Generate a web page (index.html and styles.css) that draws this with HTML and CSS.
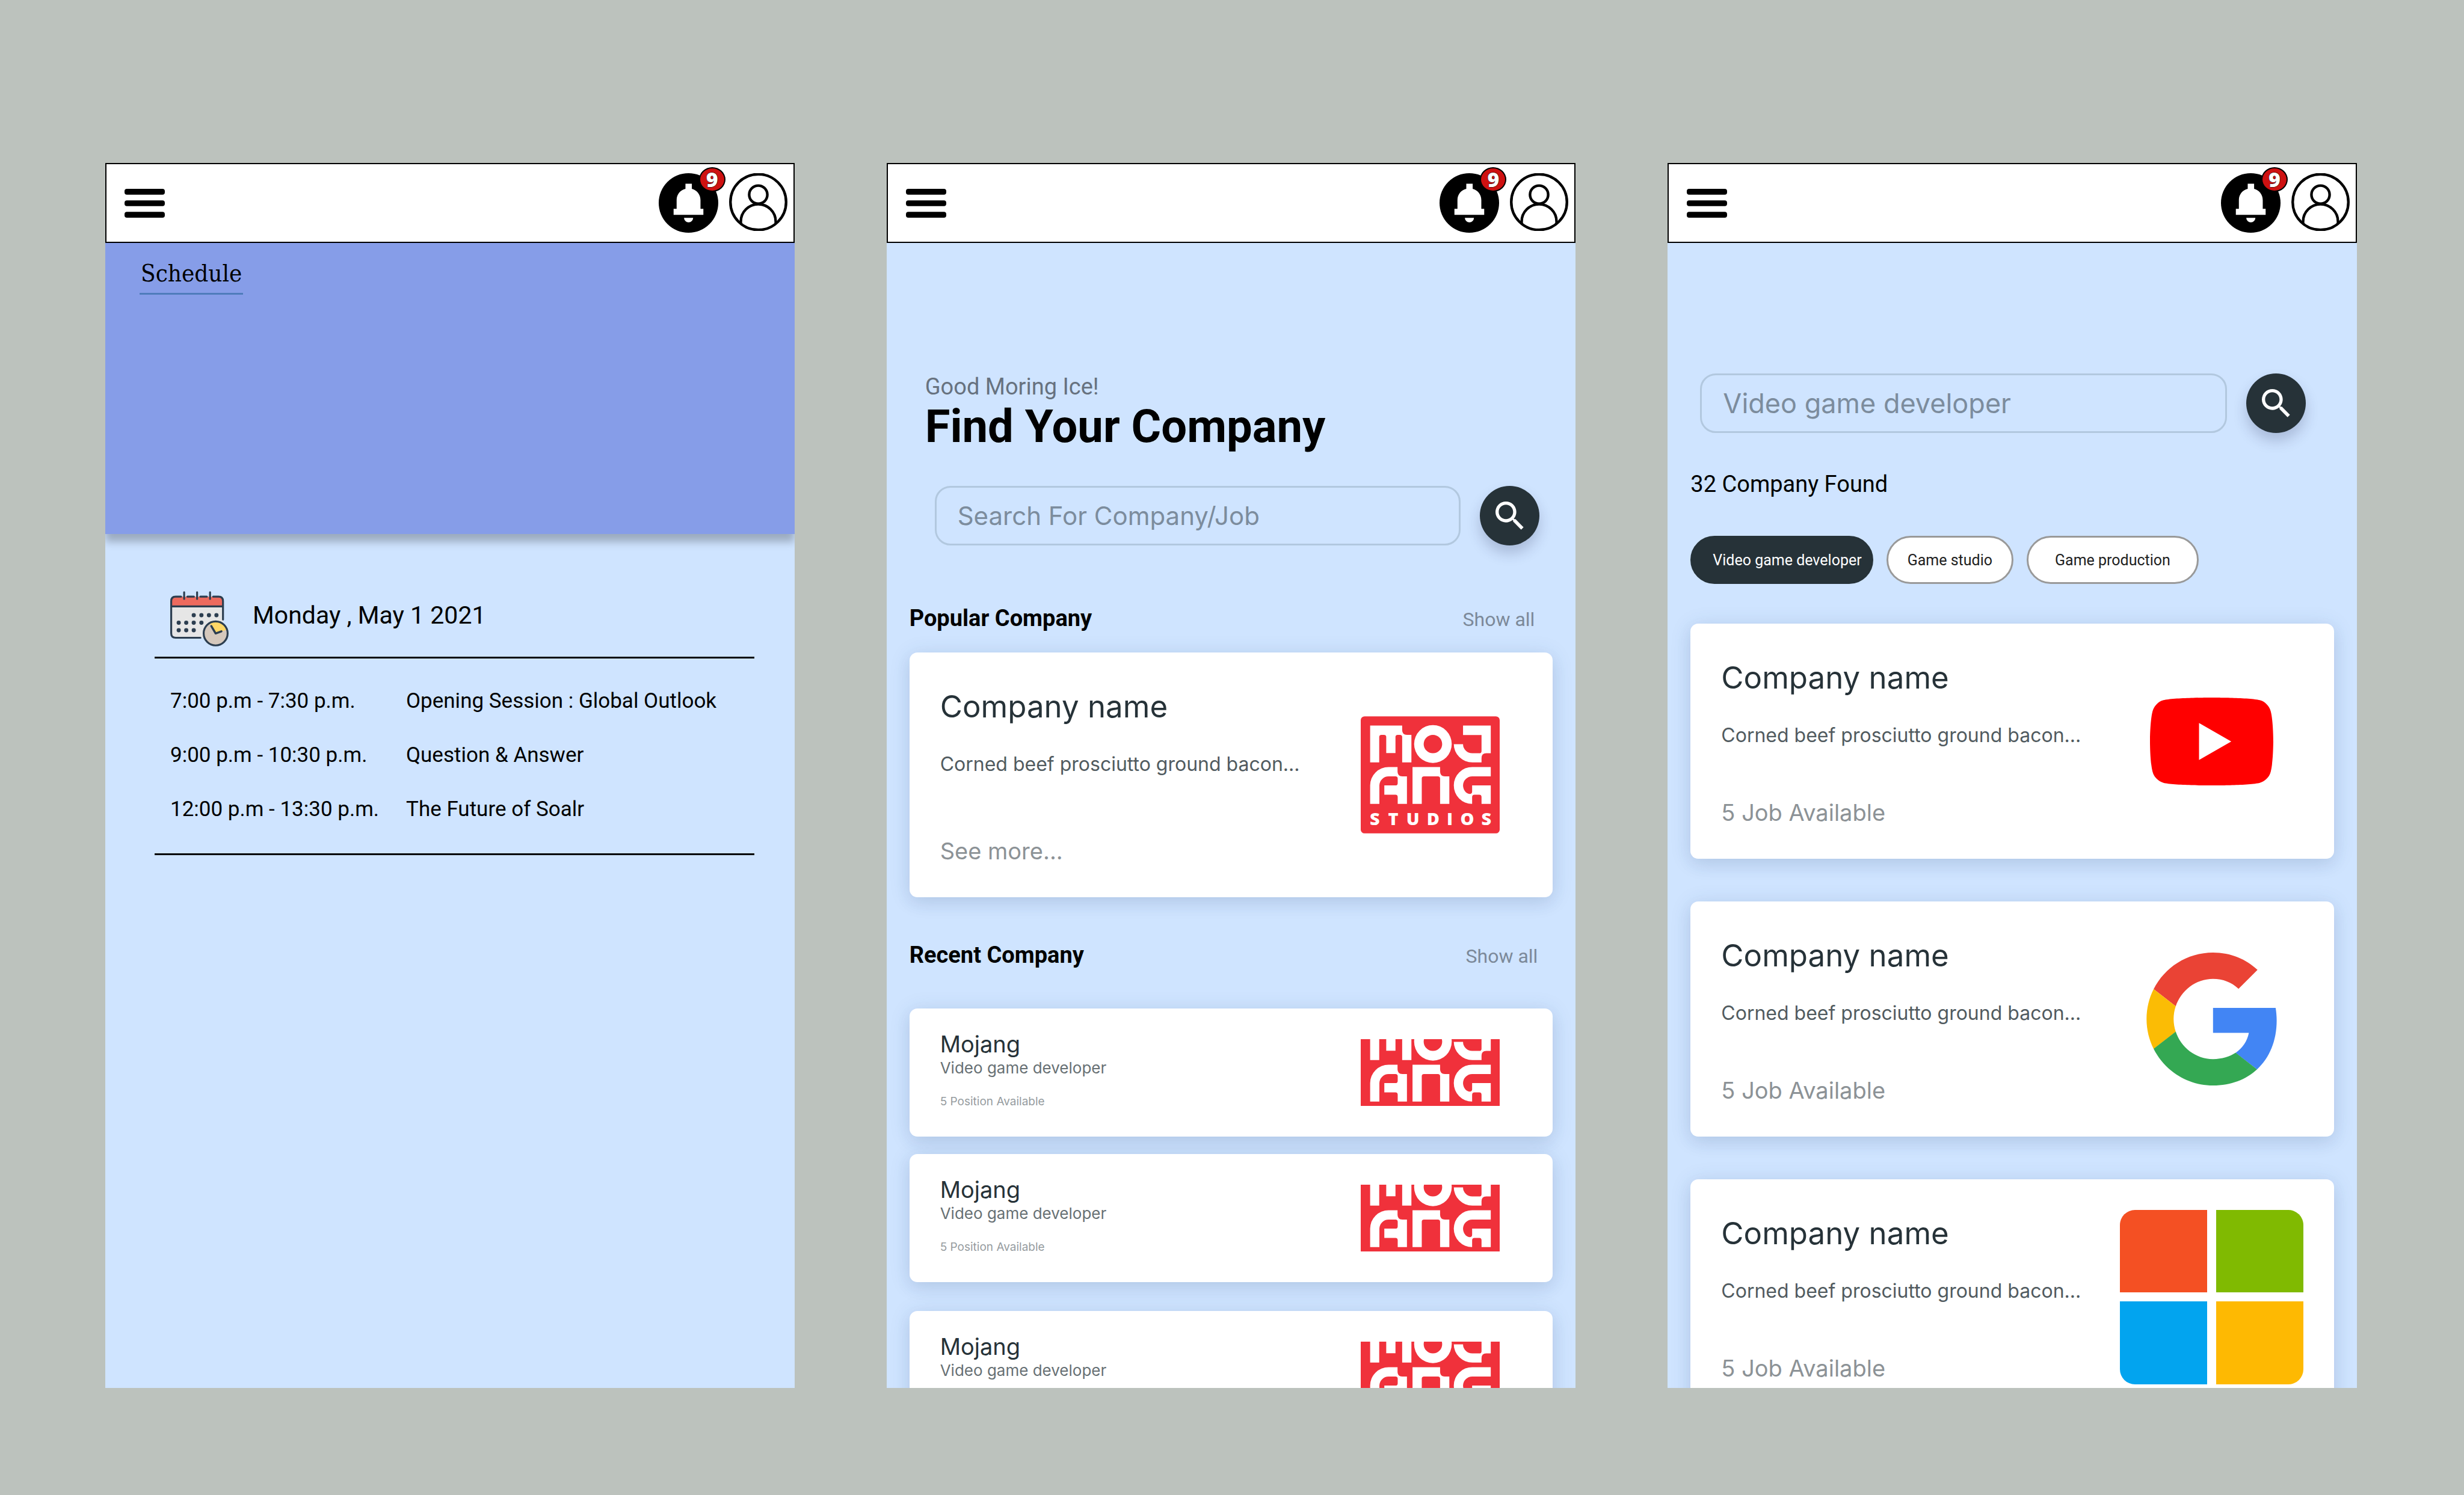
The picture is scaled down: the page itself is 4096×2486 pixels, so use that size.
FILE: index.html
```html
<!DOCTYPE html>
<html lang="en">
<head>
<meta charset="utf-8">
<meta name="viewport" content="width=device-width, initial-scale=1">
<title>Company finder</title>
<link rel="stylesheet" href="styles.css">
</head>
<body>
<svg class="sprite" aria-hidden="true">
  <symbol id="menu" viewBox="0 0 84 60">
    <rect width="84" height="12" rx="5"/><rect y="24" width="84" height="12" rx="5"/><rect y="48" width="84" height="12" rx="5"/>
  </symbol>
  <symbol id="bell" viewBox="0 0 124 124">
    <circle cx="62" cy="62" r="62"/>
    <path fill="#fff" d="M55.700 22H69V32.500C79 35 87 44 87 56V74.300H93V86.700H31V74.300H37.300V56C37.300 44 45 35 55.700 32.500ZM52.700 93H71.700A9.500 9.500 0 0 1 52.700 93Z"/>
  </symbol>
  <symbol id="user" viewBox="0 0 122 120">
    <g fill="none" stroke="#000" stroke-width="5.500"><circle cx="61" cy="60" r="58.200"/><circle cx="61" cy="44.500" r="19"/><path d="M24.500 106V101A36.500 36.500 0 0 1 97.500 101V106"/></g>
  </symbol>
  <symbol id="search" viewBox="0 0 24 24">
    <path fill="#fff" d="M15.500 14h-.79l-.28-.27A6.471 6.471 0 0 0 16 9.500 6.500 6.500 0 1 0 9.500 16c1.610 0 3.090-.59 4.230-1.570l.27.28v.79l5 4.990L20.490 19l-4.990-5zm-6 0C7.010 14 5 11.990 5 9.500S7.010 5 9.500 5 14 7.010 14 9.500 11.990 14 9.500 14z"/>
  </symbol>
  <symbol id="mojang" viewBox="0 0 872 735">
    <rect width="872" height="735" rx="24" fill="#f0313b"/>
    <g fill="#fff">
      <path d="M59 58H260V86Q260 116 290 116H318V289H260V130Q260 116 246 116H232Q218 116 218 130V231H160V130Q160 116 146 116H130Q116 116 116 130V289H59Z"/>
      <path fill-rule="evenodd" d="M453 55A118 119 0 1 1 453 293A118 119 0 1 1 453 55ZM453 116A58 58 0 1 0 453 232A58 58 0 1 0 453 116Z"/>
      <path d="M642 58H816V232H788Q758 232 758 262V289H701A117 114 0 0 1 584 175H642A58 57 0 0 0 701 232H744Q758 232 758 218V117H642Z"/>
      <path d="M59 550V434A116 116 0 0 1 175 318H231V347Q231 377 261 377H290V550H232V507Q232 492 218 492H148V434H217Q232 434 232 419V391Q232 377 218 377H175A58 58 0 0 0 117 434V550Z"/>
      <path d="M325 318H498V347Q498 377 528 377H556V550H498V391Q498 377 484 377H397Q383 377 383 391V550H325Z"/>
      <path d="M816 318H701A116 116 0 0 0 699 550V507Q699 492 714 492H744Q758 492 758 507V550H816V434H699V472Q699 487 683 487C660 487 642 460 642 434A58 58 0 0 1 701 377H816Z"/>
      <text class="studios" x="88 204 327 454 559 668 788" y="684">STUDIOS</text>
    </g>
  </symbol>
</svg>

<main class="board">
  <section class="phone">
    <header class="topbar">
      <button class="icon-button" aria-label="Menu"><svg class="menu-icon"><use href="#menu"/></svg></button>
      <div class="topbar-actions">
        <button class="icon-button bell" aria-label="Notifications"><svg class="bell-icon"><use href="#bell"/></svg><span class="badge">9</span></button>
        <button class="icon-button" aria-label="Profile"><svg class="user-icon"><use href="#user"/></svg></button>
      </div>
    </header>
    <div class="banner"><h1 class="banner-title">Schedule</h1></div>
    <div class="agenda">
      <div class="agenda-head">
        <svg class="calendar-icon" viewBox="0 0 365 345" aria-hidden="true">
          <rect x="6" y="34" width="324" height="257" rx="28" fill="#e6e6e6"/>
          <path fill="#ed6a5e" d="M6 95V62Q6 34 34 34H302Q330 34 330 62V95Z"/>
          <g fill="none" stroke="#2c3e50" stroke-width="12" stroke-linecap="round" stroke-linejoin="round">
            <path d="M189 291H34Q6 291 6 263V62Q6 34 34 34H68M107 34H148M188 34H229M268 34H302Q330 34 330 62V177M6 95H330M87 6V48M168 6V48M249 6V48"/>
          </g>
          <g fill="#2c3e50">
            <circle cx="147" cy="150" r="13"/><circle cx="195" cy="150" r="13"/><circle cx="242" cy="150" r="13"/><circle cx="289" cy="150" r="13"/>
            <circle cx="53" cy="197" r="13"/><circle cx="100" cy="197" r="13"/><circle cx="147" cy="197" r="13"/><circle cx="195" cy="197" r="13"/>
            <circle cx="53" cy="244" r="13"/><circle cx="100" cy="244" r="13"/><circle cx="147" cy="244" r="13"/>
          </g>
          <circle cx="284" cy="264" r="75" fill="#d5c8bc"/>
          <path fill="#ffd766" d="M284 264L248 202A72 72 0 0 1 352 241Z"/>
          <g fill="none" stroke="#2c3e50" stroke-linecap="round" stroke-linejoin="round"><circle cx="284" cy="264" r="75" stroke-width="12"/><path stroke-width="13" d="M257 218L284 264L320 251"/></g>
        </svg>
        <h2 class="agenda-date">Monday , May 1 2021</h2>
      </div>
      <table class="sessions">
        <tbody>
          <tr><td class="time">7:00 p.m - 7:30 p.m.</td><td>Opening Session : Global Outlook</td></tr>
          <tr><td class="time">9:00 p.m - 10:30 p.m.</td><td>Question &amp; Answer</td></tr>
          <tr><td class="time">12:00 p.m - 13:30 p.m.</td><td>The Future of Soalr</td></tr>
        </tbody>
      </table>
    </div>
  </section>

  <section class="phone">
    <header class="topbar">
      <button class="icon-button" aria-label="Menu"><svg class="menu-icon"><use href="#menu"/></svg></button>
      <div class="topbar-actions">
        <button class="icon-button bell" aria-label="Notifications"><svg class="bell-icon"><use href="#bell"/></svg><span class="badge">9</span></button>
        <button class="icon-button" aria-label="Profile"><svg class="user-icon"><use href="#user"/></svg></button>
      </div>
    </header>
    <div class="welcome">
      <p class="greeting">Good Moring Ice!</p>
      <h1 class="headline">Find Your Company</h1>
    </div>
    <form class="search search-home">
      <input class="search-box" type="text" aria-label="Search for company or job" placeholder="Search For Company/Job">
      <button class="search-button" type="button" aria-label="Search"><svg class="search-icon"><use href="#search"/></svg></button>
    </form>
    <div class="section-head popular">
      <h2 class="section-title">Popular Company</h2>
      <a class="show-all" href="#popular">Show all</a>
    </div>
    <article class="card">
      <div class="card-text card-text-popular">
        <h3 class="card-title">Company name</h3>
        <p class="card-description">Corned beef prosciutto ground bacon...</p>
        <a class="card-note" href="#company">See more...</a>
      </div>
      <div class="logo-slot"><svg class="mojang-logo" role="img" aria-label="Mojang Studios"><use href="#mojang"/></svg></div>
    </article>
    <div class="section-head recent">
      <h2 class="section-title">Recent Company</h2>
      <a class="show-all" href="#recent">Show all</a>
    </div>
    <article class="card">
      <div class="compact-text">
        <h3 class="compact-title">Mojang</h3>
        <p class="compact-kind">Video game developer</p>
        <p class="compact-note">5 Position Available</p>
      </div>
      <div class="logo-slot"><div class="logo-crop"><svg class="mojang-logo" aria-hidden="true"><use href="#mojang"/></svg></div></div>
    </article>
    <article class="card card-second">
      <div class="compact-text">
        <h3 class="compact-title">Mojang</h3>
        <p class="compact-kind">Video game developer</p>
        <p class="compact-note">5 Position Available</p>
      </div>
      <div class="logo-slot"><div class="logo-crop"><svg class="mojang-logo" aria-hidden="true"><use href="#mojang"/></svg></div></div>
    </article>
    <article class="card card-third">
      <div class="compact-text">
        <h3 class="compact-title">Mojang</h3>
        <p class="compact-kind">Video game developer</p>
      </div>
      <div class="logo-slot"><div class="logo-crop"><svg class="mojang-logo" aria-hidden="true"><use href="#mojang"/></svg></div></div>
    </article>
  </section>

  <section class="phone">
    <header class="topbar">
      <button class="icon-button" aria-label="Menu"><svg class="menu-icon"><use href="#menu"/></svg></button>
      <div class="topbar-actions">
        <button class="icon-button bell" aria-label="Notifications"><svg class="bell-icon"><use href="#bell"/></svg><span class="badge">9</span></button>
        <button class="icon-button" aria-label="Profile"><svg class="user-icon"><use href="#user"/></svg></button>
      </div>
    </header>
    <form class="search search-results">
      <input class="search-box search-box-large" type="text" aria-label="Search for company or job" value="Video game developer">
      <button class="search-button" type="button" aria-label="Search"><svg class="search-icon"><use href="#search"/></svg></button>
    </form>
    <p class="result-count">32 Company Found</p>
    <div class="chips">
      <button class="chip chip-active">Video game developer</button>
      <button class="chip">Game studio</button>
      <button class="chip chip-wide">Game production</button>
    </div>
    <div class="results">
      <article class="card">
        <div class="card-text">
          <h3 class="card-title">Company name</h3>
          <p class="card-description">Corned beef prosciutto ground bacon...</p>
          <p class="card-note">5 Job Available</p>
        </div>
        <div class="logo-slot">
          <svg class="youtube-logo" viewBox="0 3.545 24 16.910" preserveAspectRatio="none" role="img" aria-label="YouTube">
            <path fill="#f00" d="M23.498 6.186a3.016 3.016 0 0 0-2.122-2.136C19.505 3.545 12 3.545 12 3.545s-7.505 0-9.377.505A3.017 3.017 0 0 0 .502 6.186C0 8.070 0 12 0 12s0 3.930.502 5.814a3.016 3.016 0 0 0 2.122 2.136c1.871.505 9.376.505 9.376.505s7.505 0 9.377-.505a3.015 3.015 0 0 0 2.122-2.136C24 15.930 24 12 24 12s0-3.930-.502-5.814zM9.545 15.568V8.432L15.818 12l-6.273 3.568z"/>
          </svg>
        </div>
      </article>
      <article class="card">
        <div class="card-text">
          <h3 class="card-title">Company name</h3>
          <p class="card-description">Corned beef prosciutto ground bacon...</p>
          <p class="card-note">5 Job Available</p>
        </div>
        <div class="logo-slot">
          <svg class="google-logo" viewBox="0 0 47 48" role="img" aria-label="Google">
            <path fill="#ea4335" d="M24 9.500c3.540 0 6.710 1.220 9.210 3.600l6.850-6.850C35.900 2.380 30.470 0 24 0 14.620 0 6.510 5.380 2.560 13.220l7.980 6.190C12.430 13.720 17.740 9.500 24 9.500z"/>
            <path fill="#4285f4" d="M46.980 24.550c0-1.570-.15-3.090-.38-4.550H24v9.020h12.940c-.58 2.960-2.260 5.480-4.780 7.180l7.730 6c4.510-4.180 7.090-10.360 7.090-17.650z"/>
            <path fill="#fbbc05" d="M10.530 28.590c-.48-1.450-.76-2.990-.76-4.590s.27-3.140.76-4.590l-7.980-6.190C.92 16.460 0 20.120 0 24c0 3.880.92 7.540 2.560 10.780l7.970-6.190z"/>
            <path fill="#34a853" d="M24 48c6.480 0 11.930-2.130 15.890-5.810l-7.730-6c-2.150 1.450-4.920 2.300-8.160 2.300-6.260 0-11.570-4.220-13.470-9.910l-7.980 6.190C6.510 42.620 14.620 48 24 48z"/>
          </svg>
        </div>
      </article>
      <article class="card">
        <div class="card-text">
          <h3 class="card-title">Company name</h3>
          <p class="card-description">Corned beef prosciutto ground bacon...</p>
          <p class="card-note">5 Job Available</p>
        </div>
        <div class="logo-slot">
          <div class="microsoft-logo" role="img" aria-label="Microsoft">
            <span class="tile-red"></span><span class="tile-green"></span><span class="tile-blue"></span><span class="tile-yellow"></span>
          </div>
        </div>
      </article>
    </div>
  </section>
</main>
</body>
</html>
```
FILE: styles.css
```css
*,
*::before,
*::after {
  box-sizing: border-box;
}

body {
  margin: 0;
  background: #bcc2bd;
  color: #000;
  font-family: Roboto, "Noto Sans", sans-serif;
}

h1, h2, h3, p {
  margin: 0;
  font-weight: 400;
}

a {
  text-decoration: none;
}

button, input {
  font: inherit;
}

.sprite {
  display: none;
}

.board {
  display: flex;
  gap: 153px;
  padding: 271px 178px 178px 175px;
}

.phone {
  flex: 1;
  aspect-ratio: 9 / 16;
  min-width: 0;
  overflow: hidden;
  background: #cfe4ff;
}

/* Top bar */

.topbar {
  display: flex;
  align-items: center;
  justify-content: space-between;
  height: 133px;
  padding: 0 10px 0 30px;
  border: 2px solid #000;
  background: #fff;
}

.topbar-actions {
  display: flex;
  align-items: flex-start;
  gap: 18px;
}

.icon-button {
  display: block;
  padding: 0;
  border: 0;
  background: none;
}

.icon-button svg {
  display: block;
}

.menu-icon {
  width: 67px;
  height: 48px;
}

.bell {
  position: relative;
}

.bell-icon {
  width: 99px;
  height: 99px;
}

.user-icon {
  width: 97px;
  height: 96px;
}

.badge {
  position: absolute;
  top: -10px;
  left: 67px;
  width: 44px;
  height: 41px;
  border: 2px solid #000;
  border-radius: 50%;
  background: #ce1111;
  color: #fff;
  font: 800 34px/37px "Open Sans", sans-serif;
  text-align: center;
  -webkit-text-stroke: 1px #000;
  paint-order: stroke;
}

/* Schedule */

.banner {
  height: 484px;
  padding: 26px 57px;
  background: #869de8;
  box-shadow: 0 13px 13px rgba(0, 0, 0, 0.25);
}

.banner-title {
  display: inline-block;
  padding: 0 2px 9px;
  border-bottom: 3px solid #4f7cbb;
  font: 400 40px/48px "DejaVu Serif Condensed", "DejaVu Serif", serif;
}

.agenda {
  padding: 95px 67px 0 82px;
}

.agenda-head {
  display: flex;
  gap: 40px;
  padding: 0 26px 17px;
  border-bottom: 3px solid #000;
}

.calendar-icon {
  width: 97px;
  height: 92px;
}

.agenda-date {
  font-size: 41px;
  line-height: 80px;
}

.sessions {
  width: 100%;
  border-collapse: separate;
  border-spacing: 0;
  padding: 26px 0 28px 26px;
  border-bottom: 3px solid #000;
  font-size: 35px;
  line-height: 90px;
}

.sessions td {
  padding: 0;
}

.sessions .time {
  width: 392px;
}

/* Home */

.welcome {
  padding: 215px 64px 56px;
}

.greeting {
  color: #67727f;
  font-size: 38px;
  line-height: 48px;
}

.headline {
  font-size: 76px;
  font-weight: 700;
  line-height: 85px;
}

.search {
  display: flex;
  gap: 32px;
}

.search-home {
  padding: 0 60px 0 80px;
}

.search-results {
  padding: 217px 85px 0 54px;
}

.search-box {
  flex: 1;
  min-width: 0;
  height: 99px;
  padding: 0 35px;
  border: 3px solid #b2c8df;
  border-radius: 26px;
  background: transparent;
  color: #7c8c9d;
  font-family: Inter, sans-serif;
  font-size: 42px;
}

.search-box::placeholder {
  color: #7c8c9d;
}

.search-box-large {
  font-size: 45px;
}

.search-button {
  display: grid;
  place-items: center;
  width: 99px;
  height: 99px;
  padding: 0;
  border: 0;
  border-radius: 50%;
  background: #263238;
  box-shadow: 0 13px 22px rgba(38, 40, 80, 0.22);
}

.search-icon {
  width: 64px;
  height: 64px;
}

.section-head {
  display: flex;
  align-items: baseline;
  justify-content: space-between;
  padding: 0 63px 0 38px;
}

.popular {
  margin: 97px 0 33px;
  padding-right: 68px;
}

.recent {
  margin: 72px 0 65px;
}

.section-title {
  font-size: 38px;
  font-weight: 700;
  line-height: 48px;
}

.show-all {
  color: #7c8999;
  font-size: 32px;
  line-height: 40px;
}

/* Cards */

.card {
  display: flex;
  align-items: center;
  justify-content: space-between;
  margin: 0 38px;
  padding: 0 51px;
  border-radius: 13px;
  background: #fff;
  box-shadow: 0 4px 36px rgba(38, 80, 120, 0.12), 0 10px 26px rgba(38, 50, 100, 0.08);
  font-family: Inter, sans-serif;
}

.card-second {
  margin-top: 29px;
}

.card-third {
  margin-top: 48px;
}

.card-text {
  display: grid;
  padding: 58px 0 53px;
}

.card-title {
  margin-bottom: 44px;
  color: #263238;
  font-size: 51px;
  line-height: 64px;
}

.card-description {
  margin-bottom: 84px;
  color: #515b60;
  font-size: 32px;
  line-height: 40px;
}

.card-text-popular .card-description {
  margin-bottom: 100px;
}

.card-note {
  color: #8c9296;
  font-size: 38px;
  line-height: 48px;
}

.compact-text {
  min-height: 213px;
  padding: 37px 0 44px;
}

.compact-title {
  color: #263238;
  font-size: 38px;
  line-height: 44px;
}

.compact-kind {
  color: #677074;
  font-size: 26px;
  line-height: 36px;
}

.compact-note {
  margin-top: 24px;
  color: #969c9f;
  font-size: 19px;
  line-height: 28px;
}

.logo-slot {
  display: flex;
  justify-content: center;
  width: 305px;
}

.logo-crop {
  display: flex;
  align-items: center;
  height: 111px;
  overflow: hidden;
}

.mojang-logo {
  flex: none;
  width: 231px;
  height: 195px;
}

.studios {
  font: 800 109px "Open Sans", sans-serif;
  text-anchor: middle;
}

.youtube-logo {
  width: 205px;
  height: 146px;
}

.google-logo {
  width: 217px;
  height: 221px;
}

.microsoft-logo {
  display: grid;
  grid-template-columns: 1fr 1fr;
  gap: 15px;
  width: 305px;
  height: 290px;
  border-radius: 25px;
  overflow: hidden;
}

.tile-red {
  background: #f45023;
}

.tile-green {
  background: #80ba01;
}

.tile-blue {
  background: #02a4ef;
}

.tile-yellow {
  background: #feb902;
}

/* Results */

.result-count {
  padding: 61px 38px 62px;
  font-size: 38px;
  line-height: 48px;
}

.chips {
  display: flex;
  gap: 22px;
  padding: 0 38px 66px;
}

.chip {
  height: 80px;
  padding: 0 32px;
  border: 3px solid #999;
  border-radius: 40px;
  background: #fff;
  color: #212121;
  font-size: 25px;
}

.chip-active {
  padding: 0 16px 0 34px;
  border-color: #263238;
  background: #263238;
  color: #fff;
}

.chip-wide {
  padding: 0 44px;
}

.results {
  display: grid;
  gap: 71px;
}
```
